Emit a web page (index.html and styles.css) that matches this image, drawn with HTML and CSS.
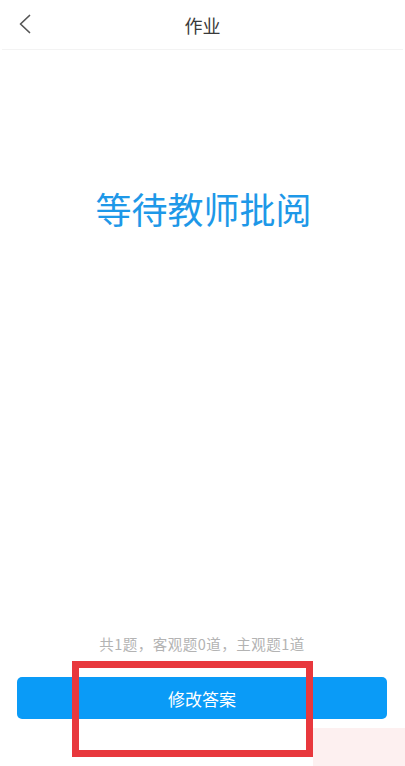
FILE: index.html
```html
<!DOCTYPE html>
<html lang="zh-CN">
<head>
<meta charset="utf-8">
<title>作业</title>
<link rel="stylesheet" href="styles.css">
</head>
<body>
<div class="page">
  <header class="header">
    <span class="back">
      <svg width="13" height="20" viewBox="0 0 13 20"><polyline points="11.5,1.5 2.5,10 11.5,18.5" fill="none" stroke="#555" stroke-width="1.7" stroke-linecap="round" stroke-linejoin="round"/></svg>
    </span>
    <h1 class="title">作业</h1>
  </header>
  <main class="main">
    <div class="status">等待教师批阅</div>
  </main>
  <footer class="footer">
    <p class="info">共1题，客观题0道，主观题1道</p>
    <button class="btn">修改答案</button>
  </footer>
  <div class="mark"></div>
  <div class="pink"></div>
</div>
</body>
</html>
```
FILE: styles.css
```css
* { box-sizing: border-box; }
html, body { margin: 0; padding: 0; background: #fff; }
body { font-family: "Noto Sans CJK SC", "Noto Sans", sans-serif; }
.page {
  position: relative;
  width: 405px;
  height: 766px;
  display: flex;
  flex-direction: column;
  overflow: hidden;
}
.header {
  height: 50px;
  border-bottom: 1px solid #f3f3f3;
  display: flex;
  align-items: center;
  justify-content: center;
  position: relative;
  margin: 0 2px;
}
.back {
  position: absolute;
  left: 16px;
  top: 14px;
  line-height: 0;
}
.title {
  margin: 0;
  font-size: 18px;
  font-weight: normal;
  color: #3a3a3a;
  line-height: 48px;
}
.main {
  padding-top: 140px;
  display: flex;
  justify-content: center;
}
.status {
  font-size: 36px;
  line-height: 36px;
  color: #1e98e8;
  margin-left: 2px;
}
.footer {
  margin-top: auto;
  padding: 0 18px 47px 17px;
  display: flex;
  flex-direction: column;
  align-items: center;
}
.info {
  margin: 0 0 23px;
  font-size: 14.5px;
  line-height: 20px;
  letter-spacing: 0.5px;
  color: #b3b3b3;
}
.btn {
  width: 100%;
  height: 42px;
  border: none;
  border-radius: 5px;
  background: #0a9bf7;
  color: #fff;
  font-family: inherit;
  font-size: 17px;
  padding: 0;
}
.mark {
  position: absolute;
  left: 72px;
  top: 661px;
  width: 241px;
  height: 96px;
  border: 7px solid #e8383d;
}
.pink {
  position: absolute;
  left: 313px;
  top: 728px;
  right: 0;
  bottom: 0;
  background: #fdf0f0;
}
```
